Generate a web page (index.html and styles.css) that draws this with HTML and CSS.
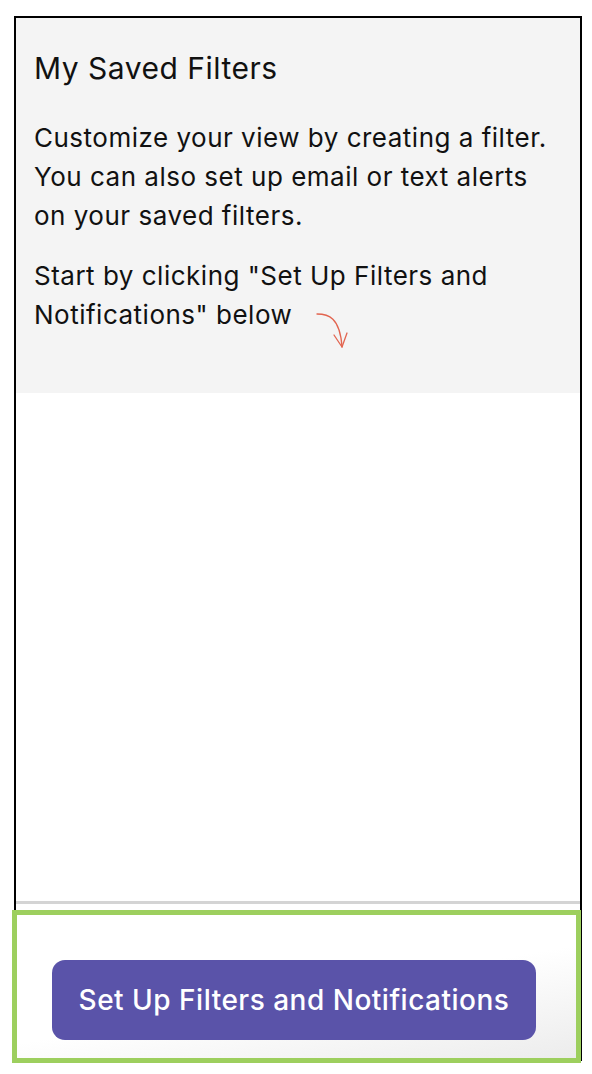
FILE: index.html
```html
<!DOCTYPE html>
<html>
<head>
<meta charset="utf-8">
<link rel="stylesheet" href="styles.css">
</head>
<body>
<div class="frame">
  <section class="intro">
    <h1 class="title">My Saved Filters</h1>
    <p class="text">Customize your view by creating a filter. You can also set up email or text alerts on your saved filters.</p>
    <p class="text">Start by clicking "Set Up Filters and Notifications" below <svg class="arrow" width="36" height="36" viewBox="0 0 36 36"><path d="M1 1 C 12 1, 24 4, 26 34" fill="none" stroke="#e2644f" stroke-width="1.3" stroke-linecap="round"/><path d="M18 22 L26 34 L31 20" fill="none" stroke="#e2644f" stroke-width="1.3" stroke-linecap="round" stroke-linejoin="round"/></svg></p>
  </section>
  <div class="empty"></div>
  <footer class="footer">
    <button class="cta">Set Up Filters and Notifications</button>
  </footer>
</div>
<div class="highlight"></div>
</body>
</html>
```
FILE: styles.css
```css
html, body {
  margin: 0;
  padding: 0;
  background: #ffffff;
}
body {
  width: 592px;
  height: 1074px;
  position: relative;
  font-family: Inter, "Noto Sans", sans-serif;
  color: #111;
}
.frame {
  margin: 16px 10px 0 14px;
  border: 2px solid #000;
  height: 1045px;
  display: flex;
  flex-direction: column;
  box-sizing: border-box;
}
.intro {
  background: #f4f4f4;
  height: 375px;
  box-sizing: border-box;
  padding: 32px 18px 0 18px;
}
.title {
  margin: 0 0 32px 0;
  font-size: 30px;
  font-weight: 400;
  line-height: 36px;
  letter-spacing: 0.5px;
}
.text {
  margin: 0 0 21px 0;
  font-size: 26px;
  line-height: 39px;
  font-weight: 400;
  letter-spacing: 0.5px;
}
.arrow {
  vertical-align: -25px;
  margin-left: 16px;
}
.empty {
  flex: 1;
  background: #fff;
}
.footer {
  border-top: 3px solid #d4d4d4;
  height: 158px;
  box-sizing: border-box;
  padding: 56px 0 0 36px;
  background: linear-gradient(170deg, #ffffff 55%, #ececec 100%);
}
.cta {
  width: 484px;
  height: 80px;
  border: none;
  border-radius: 13px;
  background: #5a53a9;
  color: #fff;
  font-family: Inter, "Noto Sans", sans-serif;
  font-size: 28px;
  font-weight: 500;
  letter-spacing: 0.5px;
  padding: 0;
  cursor: pointer;
}
.highlight {
  position: absolute;
  left: 12px;
  top: 910px;
  width: 569px;
  height: 153px;
  border: 5px solid #9dcf5e;
  box-sizing: border-box;
  pointer-events: none;
}
```
